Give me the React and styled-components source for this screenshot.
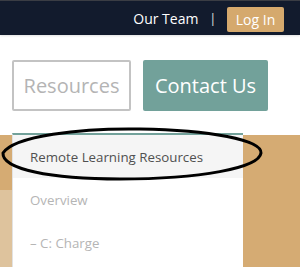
import React from 'react';
import styled, { createGlobalStyle } from 'styled-components';

const GlobalStyle = createGlobalStyle`
  html, body {
    margin: 0;
    padding: 0;
    background: #fff;
    font-family: "Open Sans", "Liberation Sans", sans-serif;
  }
`;

const Page = styled.div`
  width: 300px;
  height: 267px;
  overflow: hidden;
  position: relative;
  display: flex;
  flex-direction: column;
`;

const TopBar = styled.header`
  height: 34px;
  border-top: 1px solid #3a3d44;
  background: #121b2d;
  box-shadow: 0 1px 2px rgba(0, 0, 0, 0.12);
  display: flex;
  align-items: center;
  justify-content: flex-end;
  padding-right: 16px;
  color: #fff;
  font-size: 14px;
`;

const TopLink = styled.span`
  color: #fff;
`;

const Divider = styled.span`
  margin: 0 11px 0 11px;
  color: #e6e6e6;
  font-size: 12px;
`;

const LoginButton = styled.span`
  background: #d5a96d;
  color: #fff;
  border-radius: 2px;
  height: 25px;
  width: 57px;
  display: flex;
  align-items: center;
  justify-content: center;
  font-size: 14px;
  margin-top: 2px;
`;

const Nav = styled.nav`
  display: flex;
  gap: 12px;
  padding: 25px 12px 0;
  height: 76px;
  box-sizing: border-box;
`;

const NavButton = styled.span`
  box-sizing: border-box;
  height: 51px;
  width: ${p => p.$w}px;
  display: flex;
  align-items: center;
  justify-content: center;
  font-size: 20px;
  border-radius: 2px;
  color: ${p => (p.$filled ? '#fff' : '#b4b4b4')};
  background: ${p => (p.$filled ? '#72a19a' : '#fff')};
  border: ${p => (p.$filled ? 'none' : '2px solid #c3c3c3')};
`;

const Hero = styled.section`
  margin-top: 24px;
  flex: 1;
  background:
    linear-gradient(to bottom, transparent 55px, #dec39d 55px) left top / 12px 100% no-repeat,
    #d5ab73;
`;

const Menu = styled.ul`
  position: absolute;
  left: 12px;
  top: 133px;
  width: 231px;
  margin: 0;
  padding: 0;
  list-style: none;
  background: #fff;
  border-top: 2px solid #72a19a;
  border-left: 1px solid #e2e2e2;
  box-sizing: border-box;
  height: 140px;
`;

const MenuItem = styled.li`
  height: 43px;
  display: flex;
  align-items: center;
  padding-left: 17px;
  font-size: 13.3px;
  color: ${p => (p.$active ? '#505050' : '#b5b5b5')};
  background: ${p => (p.$active ? '#f5f5f5' : '#fff')};
`;

const Mark = styled.svg`
  position: absolute;
  left: 0;
  top: 124px;
  pointer-events: none;
`;

export default function App() {
  return (
    <Page>
      <GlobalStyle />
      <TopBar>
        <TopLink>Our Team</TopLink>
        <Divider>|</Divider>
        <LoginButton>Log In</LoginButton>
      </TopBar>
      <Nav>
        <NavButton $w={119}>Resources</NavButton>
        <NavButton $w={125} $filled>Contact Us</NavButton>
      </Nav>
      <Hero />
      <Menu>
        <MenuItem $active>Remote Learning Resources</MenuItem>
        <MenuItem>Overview</MenuItem>
        <MenuItem>– C: Charge</MenuItem>
      </Menu>
      <Mark width="270" height="64" viewBox="0 0 270 64">
        <path
          d="M3 29 C 14 12, 80 4, 140 5 C 210 6, 262 16, 261 29 C 259 44, 200 55, 120 55 C 50 55, 2 45, 3 29 Z"
          fill="none"
          stroke="#000"
          strokeWidth="3"
        />
      </Mark>
    </Page>
  );
}
